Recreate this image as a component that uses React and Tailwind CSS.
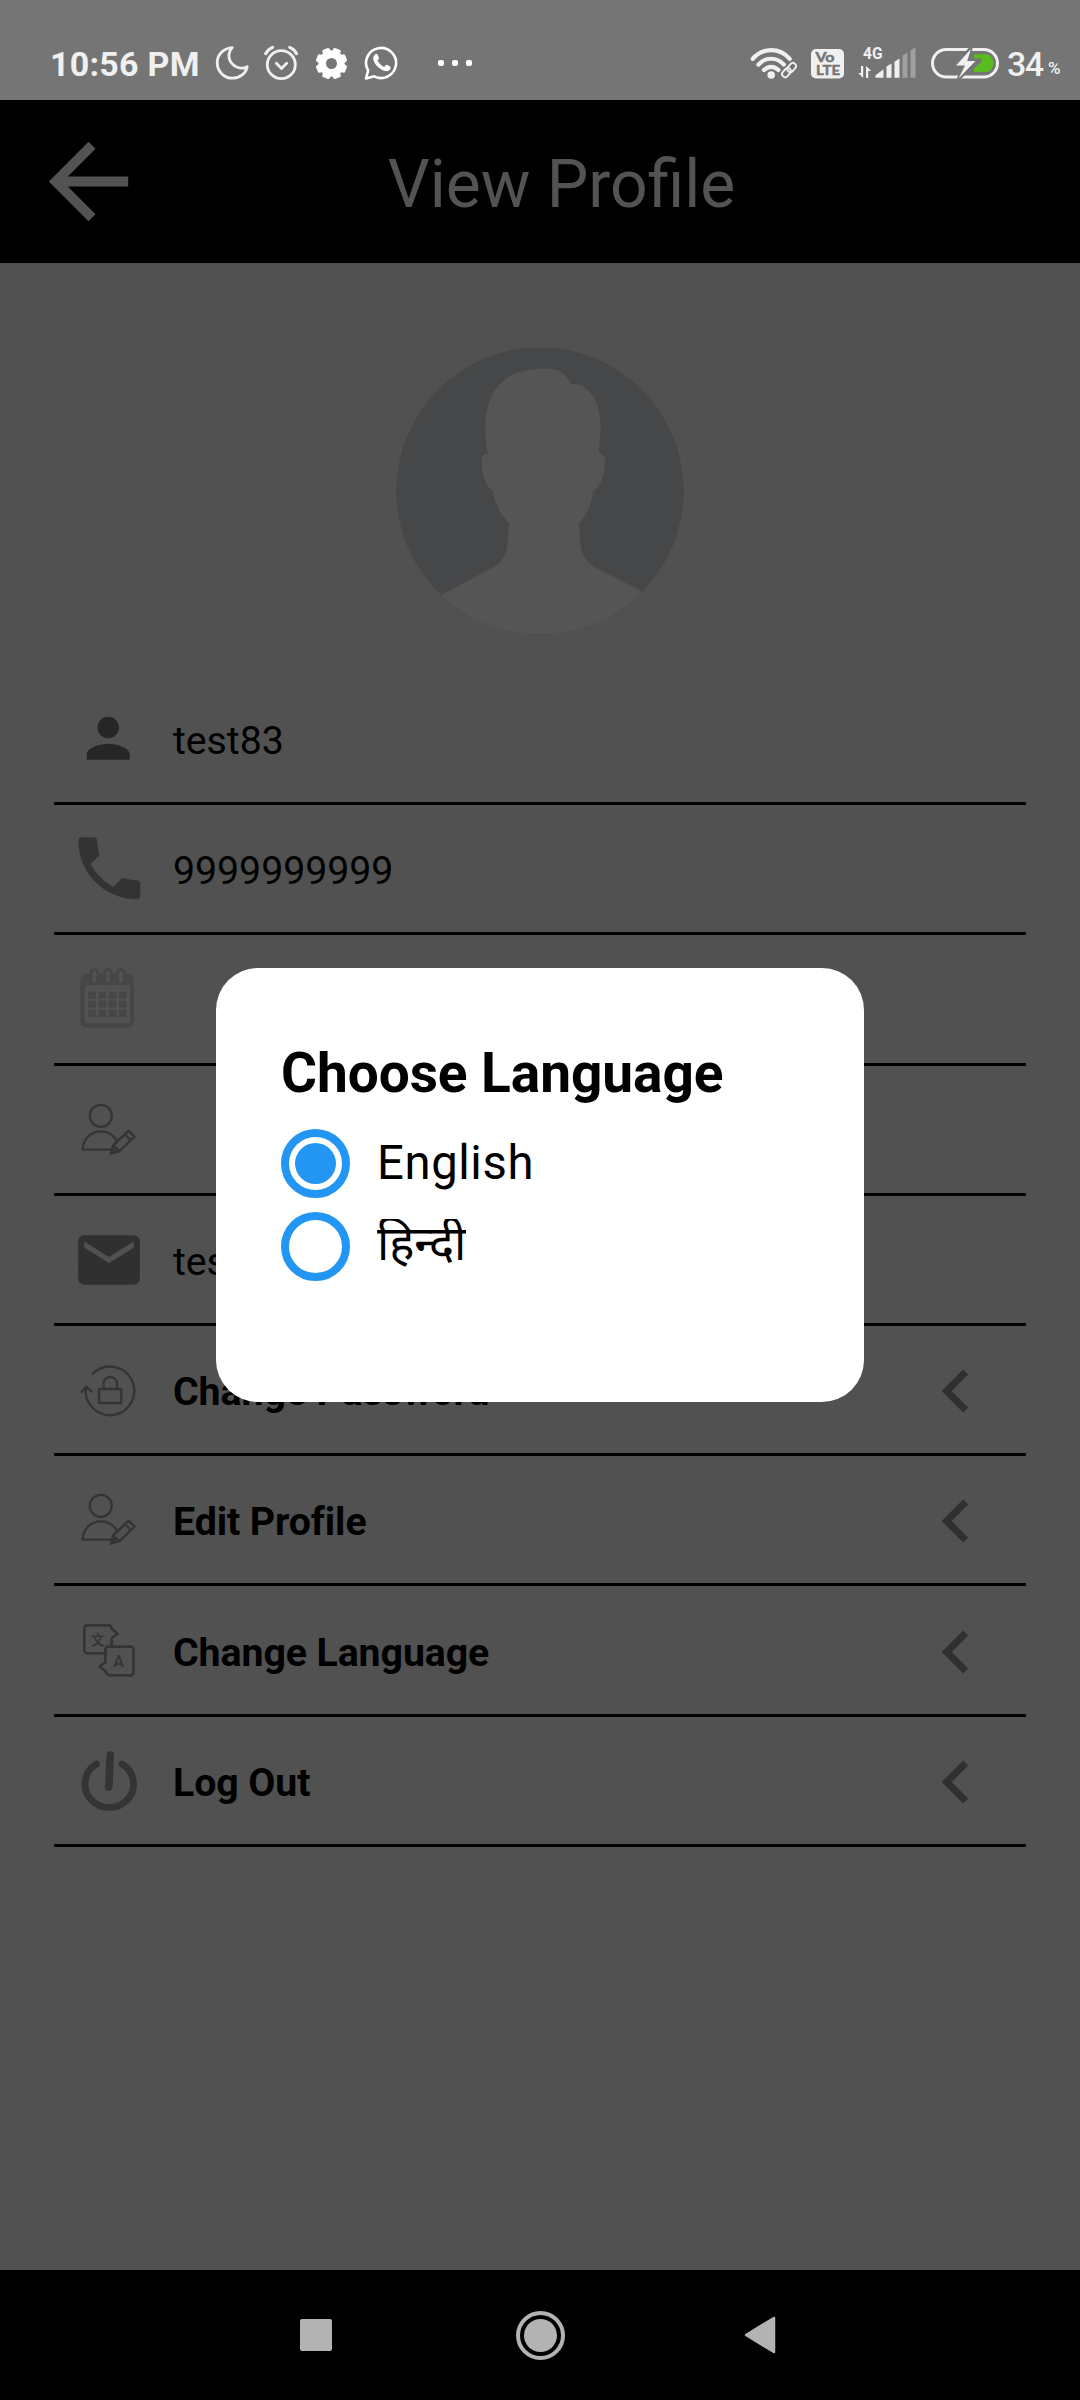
import React from "react";

const MoonIcon = () => (
  <svg width="34" height="34" viewBox="0 0 34 34" fill="none" stroke="#f0f0f0" strokeWidth="2.8" strokeLinejoin="round" className="shrink-0">
    <path d="M17.2 1.600C8.800 2 2.200 8.800 2.200 16.800c0 8.400 6.700 15.400 15.200 15.400 7.700 0 13.600-5 14.800-11.500-2 1.200-4 1.600-6.200 1.400-6.900-.6-11.900-6-12.100-12.100-.1-3 1.100-6 3.300-8.400z" />
  </svg>
);

const AlarmIcon = () => (
  <svg width="34" height="36" viewBox="0 0 34 36" fill="none" stroke="#f0f0f0" strokeLinecap="round" className="shrink-0">
    <circle cx="17.300" cy="19.700" r="14" strokeWidth="2.800" />
    <path d="M12.300 18.300l5.200 5.300 5.200-5.300" strokeWidth="2.800" strokeLinejoin="round" />
    <path d="M1.800 8.600C3.400 5.600 5.800 3.600 8.600 2.400M25.800 2.400c2.800 1.200 5.200 3.200 6.600 6.200" strokeWidth="3.200" />
  </svg>
);

const gearTeeth = [22.5, 67.5, 112.5, 157.5, 202.5, 247.5, 292.5, 337.5];

const GearIcon = () => (
  <svg width="31" height="31" viewBox="0 0 31 31" className="shrink-0">
    <g fill="#ffffff">
      {gearTeeth.map((a) => (
        <path key={a} d="M12.300 0.200h6.400l1.700 7h-9.800z" strokeLinejoin="round" stroke="#ffffff" strokeWidth="0.800" transform={`rotate(${a} 15.5 15.5)`} />
      ))}
    </g>
    <circle cx="15.500" cy="15.500" r="9.300" fill="none" stroke="#ffffff" strokeWidth="7.600" />
  </svg>
);

const WhatsAppIcon = () => (
  <svg width="35" height="36" viewBox="0 0 35 36" className="shrink-0">
    <path d="M2 33.500l2.100-8A15 15 0 1 1 10.200 31.300z" fill="none" stroke="#ffffff" strokeWidth="2.600" strokeLinejoin="round" />
    <path
      d="M11.200 9.300c.6-.6 1.700-.6 2.200.1.7 1.100 1.300 2.500 1.600 3.600.1.900-1 1.800-1.500 2.500 1.400 3 3.700 5.100 6.700 6.400.9-.7 1.600-2.200 2.600-2.100 1.300.5 2.600 1.200 3.700 1.900.7 2.500-2 4.500-4.300 4.500-5.700-.4-12.800-7.300-13-12.600 0-1.700.7-3.200 2-4.300z"
      fill="#ffffff"
    />
  </svg>
);

const WifiIcon = () => (
  <svg width="48" height="34" viewBox="0 0 48 34" fill="none" stroke="#f0f0f0" strokeWidth="4.200" strokeLinecap="round" className="shrink-0">
    <path d="M2.700 12.800C12.800 1.200 29.600 1.200 39.700 12.800" />
    <path d="M8.500 18.600C15.400 10.800 27 10.800 33.900 18.600" />
    <path d="M14 24c4.200-4.300 10.200-4.300 14.400 0" />
    <circle cx="21.200" cy="29" r="3.800" fill="#f0f0f0" stroke="none" />
    <g stroke="#757575" strokeWidth="5">
      <rect x="38.500" y="16.600" width="6.200" height="10" rx="3" transform="rotate(40 41.600 21.600)" />
      <rect x="33.300" y="21.600" width="6.200" height="10" rx="3" transform="rotate(40 36.400 26.600)" />
    </g>
    <g strokeWidth="1.900">
      <rect x="38.500" y="16.600" width="6.200" height="10" rx="3" transform="rotate(40 41.600 21.600)" />
      <rect x="33.300" y="21.600" width="6.200" height="10" rx="3" transform="rotate(40 36.400 26.600)" />
    </g>
  </svg>
);

const VolteIcon = () => (
  <svg width="33" height="30" viewBox="0 0 33 30" className="shrink-0" fontFamily="Lato, Roboto, sans-serif" fontWeight="700">
    <rect width="33" height="29.500" rx="5" fill="#f0f0f0" />
    <text x="4.500" y="13" fontSize="13.500" textLength="19" lengthAdjust="spacingAndGlyphs" fill="#757575" stroke="#757575" strokeWidth="0.500">Vo</text>
    <text x="5" y="26" fontSize="14" textLength="24" lengthAdjust="spacingAndGlyphs" fill="#757575" stroke="#757575" strokeWidth="0.500">LTE</text>
  </svg>
);

const SignalIcon = () => (
  <svg width="58" height="33" viewBox="0 0 58 33" className="shrink-0">
    <text x="5" y="13" fontSize="16.500" fontFamily="Roboto, sans-serif" fontWeight="700" textLength="19.500" lengthAdjust="spacingAndGlyphs" fill="#f0f0f0">4G</text>
    <g fill="#f0f0f0">
      <path d="M3 20h2.200v12L.2 27H3zM8 32V20l5.200 5h-3V32z" />
      <path d="M17.500 31.700v-2.400l8-6v8.400zM28.500 31.700V20.600l5-3.200v14.300zM36.500 31.700v-16l5-3.200v19.200z" />
    </g>
    <path d="M44.500 31.700V9.600l5-3.200v25.300zM52.500 31.700V4.400l5-3.200v30.500z" fill="#a0a0a0" />
  </svg>
);

const BatteryIcon = () => (
  <svg width="70" height="32" viewBox="0 0 70 32" className="shrink-0">
    <rect x="2.500" y="2.500" width="65" height="27.500" rx="13.700" fill="none" stroke="#f0f0f0" strokeWidth="3" />
    <path d="M44 7.200h11.500c4.500 0 8 4.300 8 9S60 25 55.500 25H44z" fill="#58bc1f" />
    <path d="M41 1L25.500 18.500h9L28.500 32 46 14h-9z" fill="#757575" stroke="#757575" strokeWidth="3.500" />
    <path d="M43 11.500h6c3 0 3.600 2 2 3.500L43 22.500z" fill="#757575" />
    <path d="M41 2L26 18.500h9L28.500 31.500 45.500 14h-8.300z" fill="#f0f0f0" />
  </svg>
);

const StatusBar = () => (
  <div className="flex h-[100px] items-center bg-[#757575] pt-[26px] pl-[50px] leading-none">
    <div className="w-[165px] shrink-0 pt-[2px] text-[34px] leading-[40px] font-bold tracking-[0.250px] whitespace-nowrap text-[#f0f0f0]">10:56 PM</div>
    <MoonIcon />
    <div className="ml-[15px] flex"><AlarmIcon /></div>
    <div className="ml-[18px] flex"><GearIcon /></div>
    <div className="ml-[17px] flex"><WhatsAppIcon /></div>
    <div className="ml-[39px] flex gap-2">
      <i className="size-[6px] rounded-[2px] bg-white" />
      <i className="size-[6px] rounded-[2px] bg-white" />
      <i className="size-[6px] rounded-[2px] bg-white" />
    </div>
    <div className="ml-auto flex items-center">
      <WifiIcon />
      <div className="ml-[13px] flex pt-px"><VolteIcon /></div>
      <div className="ml-[14px] flex pb-px"><SignalIcon /></div>
      <div className="ml-[14px] flex"><BatteryIcon /></div>
      <div className="ml-[7px] w-[41px] pt-px text-[34px] leading-[40px] font-medium tracking-[-1.500px] text-[#f0f0f0]">34</div>
      <div className="w-[32px] pt-[10px] text-[17px] leading-[20px] font-medium text-[#f0f0f0]">%</div>
    </div>
  </div>
);

const Header = () => (
  <header className="relative flex h-[163px] items-center justify-center bg-black">
    <svg width="119" height="119" viewBox="0 0 24 24" fill="#535353" className="absolute top-[22px] left-[28.500px]">
      <path d="M20 11H7.830l5.590-5.590L12 4l-8 8 8 8 1.410-1.410L7.830 13H20v-2z" />
    </svg>
    <h1 className="pt-[7px] pl-[43px] text-[66px] leading-[78px] text-[#535353]">View Profile</h1>
  </header>
);

const Avatar = () => (
  <svg width="288" height="288" viewBox="108 80 865 862" className="shrink-0">
    <defs>
      <clipPath id="disc"><circle cx="540.500" cy="511" r="431.500" /></clipPath>
    </defs>
    <g clipPath="url(#disc)">
      <rect x="108" y="80" width="866" height="863" fill="#464749" />
      <path
        fill="#555555"
        d="M243 824L400 740C430 722 442 700 443 665L448 607C420 580 405 550 400 512C370 490 366 455 365 415C366 402 374 400 383 398C374 340 374 300 382 265C390 225 412 190 445 169C480 148 520 143 565 143C600 143 618 160 634 190C665 186 695 210 710 245C722 275 724 310 722 340L717 396C726 400 736 405 737 415C736 460 725 495 700 512C695 555 680 585 657 607C658 630 660 650 663 680C668 710 685 728 710 742L846 812L973 942H108Z"
      />
    </g>
  </svg>
);

const PersonIcon = () => (
  <svg width="64.500" height="64.500" viewBox="0 0 24 24" fill="#262626">
    <path d="M12 12c2.210 0 4-1.790 4-4s-1.790-4-4-4-4 1.790-4 4 1.790 4 4 4zm0 2c-2.670 0-8 1.340-8 4v2h16v-2c0-2.660-5.330-4-8-4z" />
  </svg>
);

const PhoneIcon = () => (
  <svg width="82.500" height="82.500" viewBox="0 0 24 24" fill="#333333" className="ml-[2px]">
    <path d="M6.620 10.790c1.440 2.830 3.760 5.140 6.590 6.590l2.200-2.200c.27-.27.67-.36 1.020-.24 1.120.37 2.330.57 3.570.57.55 0 1 .45 1 1V20c0 .55-.45 1-1 1-9.390 0-17-7.610-17-17 0-.55.45-1 1-1h3.500c.55 0 1 .45 1 1 0 1.250.2 2.450.57 3.570.11.35.03.74-.25 1.020l-2.200 2.200z" />
  </svg>
);

const CalendarIcon = () => (
  <svg width="64" height="64" viewBox="0 0 64 64">
    <rect x="4.300" y="6.700" width="53.700" height="54.300" rx="7" fill="#464646" />
    <rect x="9" y="17.700" width="45" height="38.600" rx="2" fill="#525252" />
    {[18.300, 31.700, 44.900].map((x) => (
      <g key={x} fill="none" strokeLinecap="round">
        <path d={`M${x} 5.500v8`} stroke="#464646" strokeWidth="9" />
        <path d={`M${x} 5.800v7.500`} stroke="#525252" strokeWidth="4" />
      </g>
    ))}
    {[24.700, 33.700, 42.700].map((y) =>
      [12.300, 22.500, 32.700, 43].map((x) => <rect key={`${x}-${y}`} x={x} y={y} width="7.700" height="7" fill="#464646" />)
    )}
  </svg>
);

const UserEditIcon = () => (
  <svg width="64" height="64" viewBox="0 0 64 64" fill="none" stroke="#343434" strokeWidth="2.300" strokeLinejoin="round" strokeLinecap="round">
    <circle cx="24.800" cy="17.800" r="11" />
    <path d="M34.500 51.700H6.500C7 41 15 33.300 24.800 33.300c6.800 0 12.700 3.600 15.900 9.300" />
    <path d="M34.800 55.600L37.200 47.300 52.600 32.700 58.600 38.500 43.200 53.300zM37.200 47.300l6 6M48.800 36.300l6 6M34.800 55.600l5.200-5.200" />
  </svg>
);

const MailIcon = () => (
  <svg width="74" height="74" viewBox="0 0 24 24" fill="#303030" className="ml-px">
    <path d="M20 4H4c-1.100 0-1.990.9-1.990 2L2 18c0 1.100.9 2 2 2h16c1.100 0 2-.9 2-2V6c0-1.100-.9-2-2-2zm0 4l-8 5-8-5V6l8 5 8-5v2z" />
  </svg>
);

const LockResetIcon = () => (
  <svg width="64" height="64" viewBox="0 0 64 64" fill="none" stroke="#343434" strokeWidth="2.300" strokeLinecap="round" strokeLinejoin="round">
    <path d="M16.700 15.800A24.300 24.300 0 1 1 10 29" />
    <path d="M5.600 34L10.300 28.600 15.600 33.400" />
    <rect x="23" y="31" width="22.300" height="14" />
    <path d="M27.600 31v-5.500a6.700 6.700 0 0 1 13.400 0V31" />
  </svg>
);

const TranslateIcon = () => (
  <svg width="64" height="64" viewBox="0 0 64 64" fill="none" stroke="#343434" strokeWidth="2.700" strokeLinejoin="round">
    <path d="M28 35.300H11.300a3 3 0 0 1-3-3V10.400a3 3 0 0 1 3-3H32.500c2 0 2.800 1 3.200 3.200l5.800 5.400-5.800 4v8" />
    <path d="M32.400 28.600H54.500a3 3 0 0 1 3 3V54.400a3 3 0 0 1-3 3H33.500c-2 0-3-1.500-4-4.200L23.600 48.600l5.800-4.400V31.600a3 3 0 0 1 3-3z" />
    <text x="21.700" y="26.800" textAnchor="middle" fontSize="13.500" fontWeight="700" fontFamily="'Noto Sans CJK SC', sans-serif" fill="#363636" stroke="none">文</text>
    <text x="42.700" y="48.800" textAnchor="middle" fontSize="16" fontWeight="700" fontFamily="Roboto, sans-serif" fill="#363636" stroke="none">A</text>
  </svg>
);

const PowerIcon = () => (
  <svg width="64" height="64" viewBox="0 0 64 64" fill="none" stroke="#343434" strokeLinecap="round">
    <path d="M20.500 15A24.300 23.500 0 1 0 46 15" strokeWidth="6.800" />
    <path d="M34.300 6L32.700 38" strokeWidth="7.600" />
  </svg>
);

const Chevron = () => (
  <svg width="86" height="86" viewBox="0 0 24 24" fill="#303030" className="mt-[3px] mr-[27px] ml-auto">
    <path d="M15.410 7.410L14 6l-6 6 6 6 1.410-1.410L10.830 12z" />
  </svg>
);

const rows = [
  { Icon: PersonIcon, label: "test83", height: "h-[130px]" },
  { Icon: PhoneIcon, label: "9999999999", height: "h-[130px]" },
  { Icon: CalendarIcon, label: "", height: "h-[131px]" },
  { Icon: UserEditIcon, label: "", height: "h-[130px]" },
  { Icon: MailIcon, label: "test83", height: "h-[130px]" },
  { Icon: LockResetIcon, label: "Change Password", height: "h-[130px]", action: true },
  { Icon: UserEditIcon, label: "Edit Profile", height: "h-[130px]", action: true },
  { Icon: TranslateIcon, label: "Change Language", height: "h-[131px]", action: true },
  { Icon: PowerIcon, label: "Log Out", height: "h-[130px]", action: true },
];

const ProfileRow = ({ Icon, label, height, action }) => (
  <li className={`flex items-center border-b-[3px] border-black ${height}`}>
    <div className="flex w-[108px] shrink-0 items-center justify-center">
      <Icon />
    </div>
    <span className={`pt-[5px] pl-[11px] text-[39.300px] leading-[46px] text-black ${action ? "font-bold tracking-[-0.100px]" : "tracking-[-0.050px]"}`}>{label}</span>
    {action && <Chevron />}
  </li>
);

const Radio = ({ checked }) => (
  <span className="flex size-[69px] shrink-0 items-center justify-center rounded-full border-8 border-[#2396f3]">
    {checked && <span className="size-[41px] rounded-full bg-[#2396f3]" />}
  </span>
);

const LanguageDialog = () => (
  <div className="absolute inset-x-0 top-[100px] bottom-[130px] flex items-center justify-center">
    <div className="h-[434px] w-[648px] rounded-[42px] bg-white pt-[73px] pl-[65px] text-black">
      <h2 className="text-[55px] leading-[64px] font-bold tracking-[-0.060px]">Choose Language</h2>
      <div className="mt-6 flex flex-col gap-[14px]">
        <label className="flex h-[69px] items-center gap-[27px]">
          <Radio checked />
          <span className="pb-[2px] text-[47.250px] leading-[56px] tracking-[0.600px]">English</span>
        </label>
        <label className="flex h-[69px] items-center gap-[27px]">
          <Radio />
          <span className="h-[56px] overflow-hidden text-[47.250px] leading-[50px] font-['Roboto','Noto_Sans_Devanagari','Noto_Sans',sans-serif]">हिन्दी</span>
        </label>
      </div>
    </div>
  </div>
);

const NavBar = () => (
  <nav className="flex h-[130px] items-center bg-black pl-[300px]">
    <span className="size-8 rounded-[2px] bg-[#b3b3b3]" />
    <span className="ml-[184px] flex size-[49px] items-center justify-center rounded-full border-4 border-[#b3b3b3]">
      <span className="size-[33px] rounded-full bg-[#b3b3b3]" />
    </span>
    <svg width="32" height="38" viewBox="0 0 32 38" className="ml-[179px]">
      <path d="M2 19L30 2v34z" fill="#b3b3b3" stroke="#b3b3b3" strokeWidth="2.500" strokeLinejoin="round" />
    </svg>
  </nav>
);

export default function App() {
  return (
    <div className="relative flex h-[2400px] w-[1080px] flex-col overflow-hidden bg-[#515151] font-['Roboto',sans-serif]">
      <StatusBar />
      <Header />
      <main className="flex flex-1 flex-col pt-[84px]">
        <div className="flex justify-center"><Avatar /></div>
        <ul className="mx-[54px] mt-10">
          {rows.map((row, i) => (
            <ProfileRow key={i} {...row} />
          ))}
        </ul>
      </main>
      <NavBar />
      <LanguageDialog />
    </div>
  );
}
